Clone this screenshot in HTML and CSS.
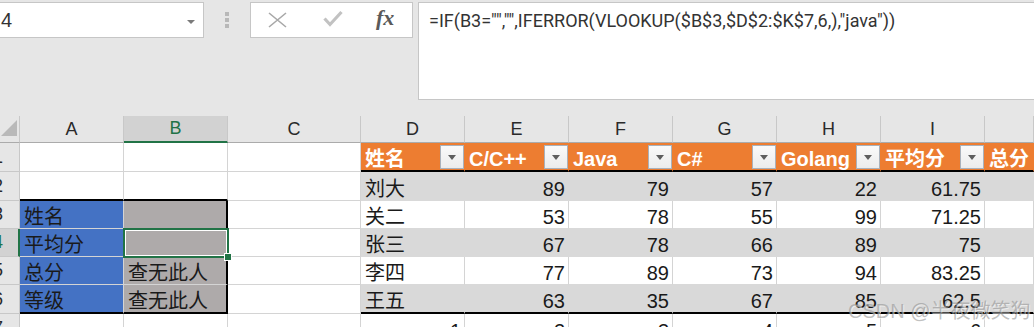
FILE: index.html
```html
<!DOCTYPE html>
<html lang="zh-CN">
<head>
<meta charset="UTF-8" />
<title>VLOOKUP 查询</title>
<link rel="stylesheet" href="styles.css">
</head>
<body>
  <div class="topbar">
    <div class="namebox"><span>4</span><i class="nb-arrow"></i></div>
    <div class="grip"><i></i><i></i><i></i></div>
    <div class="fbtns">
      <svg class="ico-x" width="19" height="16" viewBox="0 0 19 16"><path d="M1 1 L18 15 M18 1 L1 15" stroke="#a8a8a8" stroke-width="1.6" fill="none"/></svg>
      <svg class="ico-ok" width="20" height="17" viewBox="0 0 20 17"><path d="M1.5 8.5 L7 14.5 L18.5 2" stroke="#c2c2c2" stroke-width="3.2" fill="none"/></svg>
      <span class="fx">fx</span>
    </div>
    <div class="formula">=IF(B3="","",IFERROR(VLOOKUP($B$3,$D$2:$K$7,6,),"java"))</div>
  </div>

  <div class="sheet">
    <!-- column headers -->
    <div class="ch corner"><svg width="18" height="18" viewBox="0 0 18 18"><path d="M17 1 L17 17 L1 17 Z" fill="#b9b9b9"/></svg></div>
    <div class="ch">A</div>
    <div class="ch on">B</div>
    <div class="ch">C</div>
    <div class="ch">D</div>
    <div class="ch">E</div>
    <div class="ch">F</div>
    <div class="ch">G</div>
    <div class="ch">H</div>
    <div class="ch">I</div>
    <div class="ch"></div>

    <!-- row 1 -->
    <div class="rh"><span>1</span></div>
    <div class="c"></div><div class="c"></div><div class="c"></div>
    <div class="c hd">姓名<i class="flt"></i></div>
    <div class="c hd">C/C++<i class="flt"></i></div>
    <div class="c hd">Java<i class="flt"></i></div>
    <div class="c hd">C#<i class="flt"></i></div>
    <div class="c hd">Golang<i class="flt"></i></div>
    <div class="c hd">平均分<i class="flt"></i></div>
    <div class="c hd">总分</div>

    <!-- row 2 -->
    <div class="rh"><span>2</span></div>
    <div class="c tk-b"></div><div class="c tk-b"></div><div class="c"></div>
    <div class="c band">刘大</div>
    <div class="c band num">89</div>
    <div class="c band num">79</div>
    <div class="c band num">57</div>
    <div class="c band num">22</div>
    <div class="c band num">61.75</div>
    <div class="c band"></div>

    <!-- row 3 -->
    <div class="rh"><span>3</span></div>
    <div class="c blue">姓名</div><div class="c grey tk-r"></div><div class="c"></div>
    <div class="c plain">关二</div>
    <div class="c plain num">53</div>
    <div class="c plain num">78</div>
    <div class="c plain num">55</div>
    <div class="c plain num">99</div>
    <div class="c plain num">71.25</div>
    <div class="c plain"></div>

    <!-- row 4 -->
    <div class="rh on"><span>4</span></div>
    <div class="c blue">平均分</div>
    <div class="c grey tk-r active"><div class="sel"><i class="handle"></i></div></div>
    <div class="c"></div>
    <div class="c band">张三</div>
    <div class="c band num">67</div>
    <div class="c band num">78</div>
    <div class="c band num">66</div>
    <div class="c band num">89</div>
    <div class="c band num">75</div>
    <div class="c band"></div>

    <!-- row 5 -->
    <div class="rh"><span>5</span></div>
    <div class="c blue">总分</div><div class="c grey tk-r">查无此人</div><div class="c"></div>
    <div class="c plain">李四</div>
    <div class="c plain num">77</div>
    <div class="c plain num">89</div>
    <div class="c plain num">73</div>
    <div class="c plain num">94</div>
    <div class="c plain num">83.25</div>
    <div class="c plain"></div>

    <!-- row 6 -->
    <div class="rh"><span>6</span></div>
    <div class="c blue tk-b">等级</div><div class="c grey tk-r tk-b">查无此人</div><div class="c"></div>
    <div class="c band tk-b">王五</div>
    <div class="c band tk-b num">63</div>
    <div class="c band tk-b num">35</div>
    <div class="c band tk-b num">67</div>
    <div class="c band tk-b num">85</div>
    <div class="c band tk-b num">62.5</div>
    <div class="c band tk-b"></div>

    <!-- row 7 -->
    <div class="rh"><span>7</span></div>
    <div class="c"></div><div class="c"></div><div class="c"></div>
    <div class="c num">1</div>
    <div class="c num">2</div>
    <div class="c num">3</div>
    <div class="c num">4</div>
    <div class="c num">5</div>
    <div class="c num">6</div>
    <div class="c"></div>

    <div class="watermark">CSDN @半夜微笑狗</div>
  </div>
</body>
</html>
```

FILE: styles.css
```css
html, body {
  margin: 0;
  padding: 0;
  width: 1034px;
  height: 327px;
  overflow: hidden;
  background: #e6e6e6;
  font-family: "Liberation Sans", "Noto Sans CJK SC", sans-serif;
  color: #1a1a1a;
}

/* ---- formula bar ---- */
.topbar {
  display: flex;
  align-items: flex-start;
  height: 116px;
  padding-top: 2px;
  box-sizing: border-box;
}
.namebox {
  position: relative;
  width: 205px;
  height: 36px;
  margin-left: -1px;
  box-sizing: border-box;
  background: #fff;
  border: 1px solid #c6c6c6;
  font-size: 20px;
  line-height: 34px;
  color: #333;
}
.namebox span { margin-left: 1px; }
.nb-arrow {
  position: absolute;
  left: 187px;
  top: 17px;
  border-left: 4px solid transparent;
  border-right: 4px solid transparent;
  border-top: 4px solid #7a7a7a;
}
.grip {
  width: 46px;
  display: flex;
  flex-direction: column;
  align-items: center;
  gap: 2px;
  padding-top: 10px;
}
.grip i {
  width: 4px;
  height: 4px;
  background: #b8b8b8;
}
.fbtns {
  width: 163px;
  height: 36px;
  box-sizing: border-box;
  background: #fff;
  border: 1px solid #c6c6c6;
  display: flex;
  align-items: center;
  padding-left: 17px;
}
.ico-x { margin-right: 36px; }
.ico-ok { margin-right: 33px; margin-top: -3px; }
.fx {
  font-family: "Liberation Serif", serif;
  font-style: italic;
  font-weight: bold;
  font-size: 22px;
  color: #5a5a5a;
  margin-top: -4px;
}
.formula {
  flex: 1;
  margin-left: 5px;
  margin-right: -4px;
  height: 98px;
  box-sizing: border-box;
  background: #fff;
  border: 1px solid #c6c6c6;
  padding: 8px 10px;
  font-family: Roboto, "Liberation Sans", sans-serif;
  font-size: 18px;
  line-height: 20px;
  color: #333;
  white-space: nowrap;
}

/* ---- sheet grid ---- */
.sheet {
  position: relative;
  display: grid;
  grid-template-columns: 20px 104px 104px 133px 104px 104px 104px 104px 104px 104px 49px;
  grid-template-rows: 27px 29px 29px 28px 28px 28px 29px 29px;
  background: #fff;
}
.ch {
  background: #e6e6e6;
  border-right: 1px solid #c8c8c8;
  border-bottom: 1px solid #ababab;
  display: flex;
  align-items: flex-end;
  justify-content: center;
  padding-bottom: 2px;
  font-size: 18px;
  color: #2a2a2a;
}
.ch.corner {
  align-items: flex-start;
  justify-content: flex-start;
  padding: 3px 0 0 0;
}
.ch.on {
  background: #d2d2d2;
  color: #217346;
  border-bottom: 2px solid #217346;
}
.rh {
  background: #e6e6e6;
  border-right: 1px solid #c8c8c8;
  border-bottom: 1px solid #c8c8c8;
  display: flex;
  align-items: flex-end;
  padding-bottom: 3px;
  font-size: 18px;
  color: #2a2a2a;
  overflow: hidden;
}
.rh span { margin-left: -7px; }
.rh.on {
  background: #d2d2d2;
  color: #217346;
  border-right: 2px solid #217346;
}

.c {
  border-right: 1px solid #d4d4d4;
  border-bottom: 1px solid #d4d4d4;
  display: flex;
  align-items: flex-end;
  padding: 0 4px 1px 4px;
  font-size: 20px;
  line-height: 20px;
  white-space: nowrap;
  min-width: 0;
}
.num { justify-content: flex-end; padding-right: 3px; }
.blue { background: #4472c4; }
.grey { background: #aeaaaa; }
.band {
  background: #d9d9d9;
  border-right-color: #d9d9d9;
  border-bottom-color: #d9d9d9;
}
.plain { border-bottom-color: #d9d9d9; }
.tk-b { border-bottom: 2px solid #000; }
.tk-r { border-right: 2px solid #000; }

.hd {
  background: #ed7d31;
  border-right-color: #ed7d31;
  border-bottom: 2px solid #000;
  color: #fff;
  font-weight: bold;
  padding: 0 0 1px 4px;
}
.flt {
  position: relative;
  margin-left: auto;
  width: 24px;
  height: 24px;
  box-sizing: border-box;
  border: 1px solid #a9b1bb;
  background: linear-gradient(#fafafa, #ececec);
  flex: none;
}
.flt::after {
  content: "";
  position: absolute;
  left: 7px;
  top: 9px;
  border-left: 4px solid transparent;
  border-right: 4px solid transparent;
  border-top: 5px solid #5e5e5e;
}

.active { position: relative; }
.sel {
  position: absolute;
  left: -1px;
  top: -1px;
  right: -3px;
  bottom: -2px;
  border: 2px solid #217346;
  box-shadow: inset 0 0 0 1px #fff;
}
.handle {
  position: absolute;
  right: -5px;
  bottom: -5px;
  width: 6px;
  height: 6px;
  background: #217346;
  border: 1px solid #fff;
}

.watermark {
  position: absolute;
  left: 848px;
  top: 179px;
  font-size: 20px;
  color: rgba(140, 140, 140, 0.55);
  text-shadow: 1px 1px 0 rgba(255, 255, 255, 0.5);
  white-space: nowrap;
}
```
